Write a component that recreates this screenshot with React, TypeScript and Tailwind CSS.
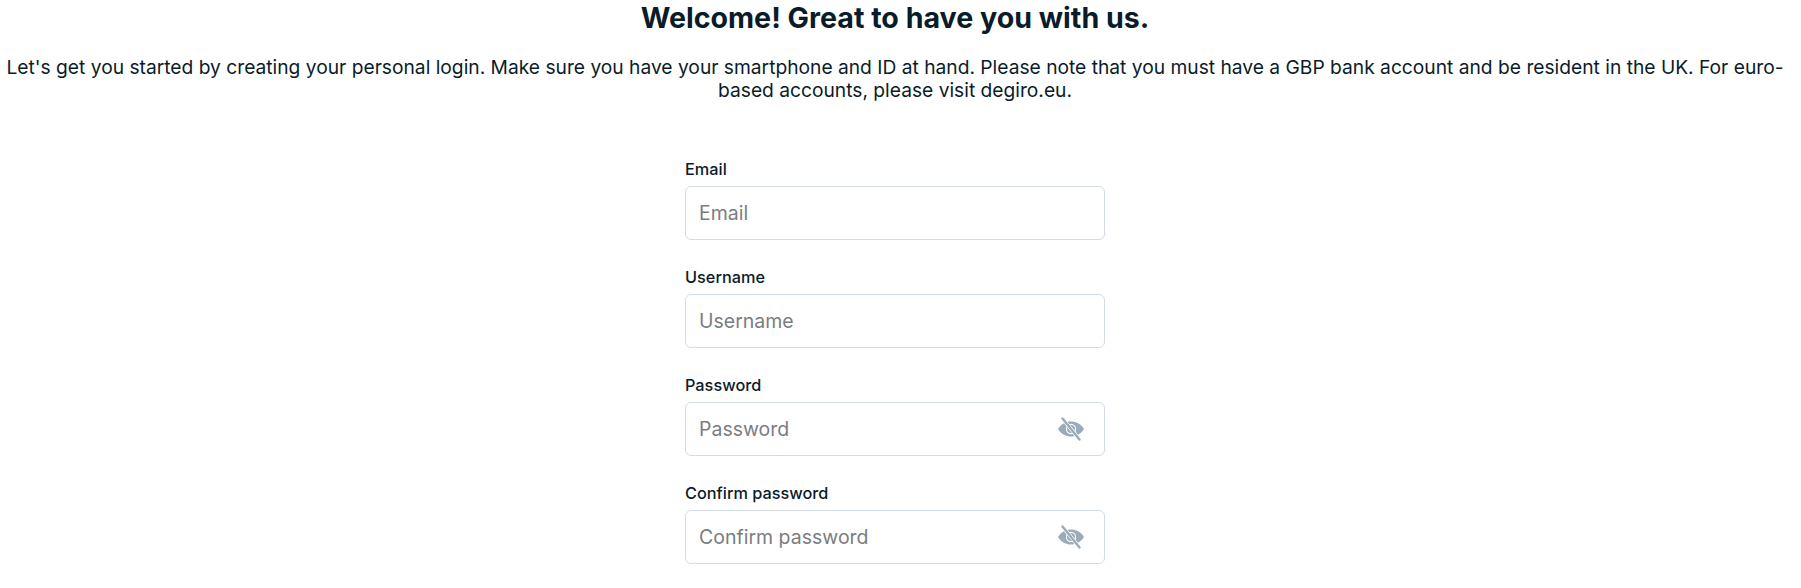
import React from "react";

const font = "font-['Inter','Liberation_Sans',sans-serif]";

function SlashedEye() {
  return (
    <svg viewBox="0 0 28 28" className="w-7 h-7 shrink-0" aria-hidden="true">
      <path
        d="M1 14C4.5 8.5 9 6.5 14 6.5s9.5 2 13 7.5c-3.5 5.5-8 7.5-13 7.5S4.5 19.5 1 14Z"
        fill="#9aabb9"
      />
      <circle cx="14" cy="14" r="4.6" fill="none" stroke="#ffffff" strokeWidth="1.1" />
      <path d="M5 3 23 25" stroke="#ffffff" strokeWidth="3.6" />
      <path d="M5.5 3.5 22.5 24.5" stroke="#9aabb9" strokeWidth="2.4" strokeLinecap="round" />
    </svg>
  );
}

function Field({ label, secret }: { label: string; secret?: boolean }) {
  return (
    <div className="flex flex-col">
      <label className="text-[16.3px] leading-[20px] font-medium text-[#0a1c29] mb-[7px]">{label}</label>
      <div className="flex items-center h-[54px] border border-[#d3dce2] rounded-[6px] pl-[13px] pr-[19px] bg-white">
        <input
          type={secret ? "password" : "text"}
          placeholder={label}
          className="flex-1 min-w-0 pt-[2px] outline-none text-[19.5px] text-[#0a1c29] placeholder:text-[#7a7d80]"
        />
        {secret && <SlashedEye />}
      </div>
    </div>
  );
}

export default function App() {
  return (
    <div className={`${font} bg-white min-h-[588px] overflow-hidden`}>
      <div className="w-[1790px]">
        <h1 className="text-center text-[28.6px] leading-[36px] font-bold text-[#0a1c29]">
          Welcome! Great to have you with us.
        </h1>
        <p className="mt-[20px] text-center text-[19.22px] leading-[23px] text-[#0a1c29]">
          Let's get you started by creating your personal login. Make sure you have your smartphone and ID at hand.
          Please note that you must have a GBP bank account and be resident in the UK. For euro-based accounts, please
          visit degiro.eu.
        </p>
        <div className="w-[420px] mx-auto mt-[57px] flex flex-col gap-[27px]">
          <Field label="Email" />
          <Field label="Username" />
          <Field label="Password" secret />
          <Field label="Confirm password" secret />
        </div>
      </div>
    </div>
  );
}
